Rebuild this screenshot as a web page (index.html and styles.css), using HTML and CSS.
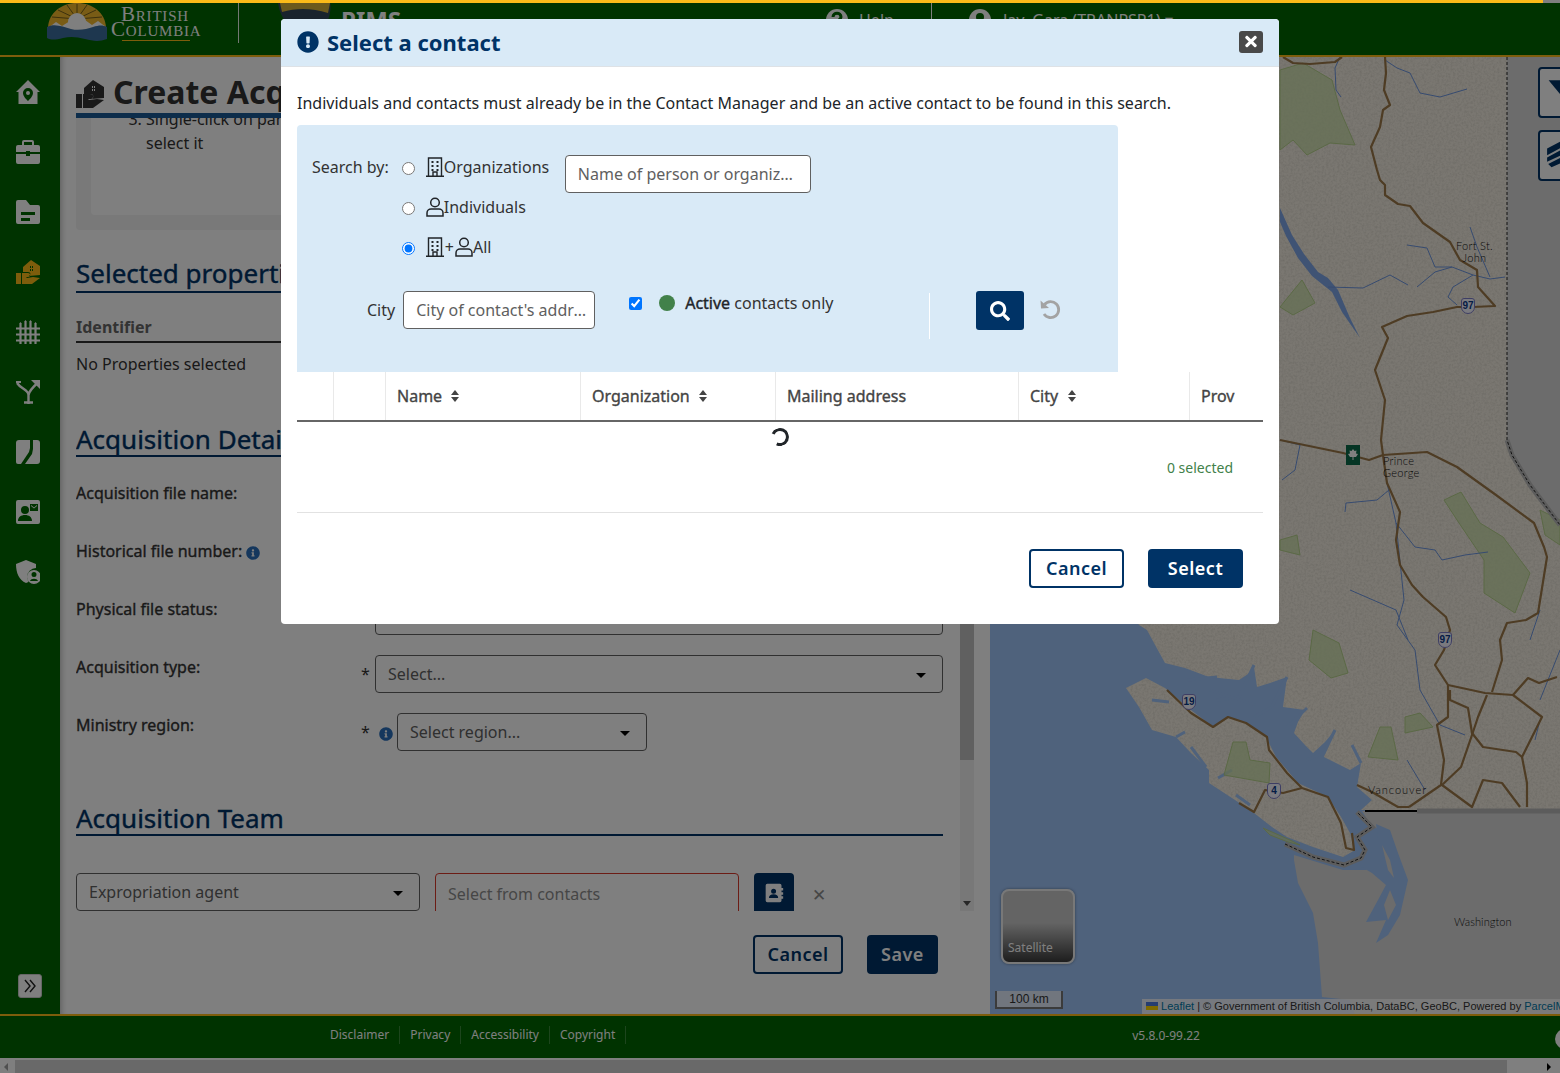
FILE: index.html
```html
<!DOCTYPE html>
<html lang="en">
<head>
<meta charset="utf-8">
<title>PIMS - Create Acquisition File</title>
<link rel="stylesheet" href="styles.css">
</head>
<body>
<div class="app">
  <div class="topline"></div>
  <header class="header">
    <div class="bc-logo">
      <svg class="bc-mark" viewBox="0 0 60 38" width="60" height="38">
        <path d="M1 24C2 10 14 0 30 0s28 10 29 24z" fill="#f2b92c"/>
        <g stroke="#5a4a18" stroke-width=".8"><path d="M30 16V1M30 16 20 2M30 16 40 2M30 16 11 7M30 16 49 7M30 16 5 14M30 16 55 14"/></g>
        <circle cx="30" cy="19" r="9" fill="#fff"/>
        <path d="M1 25 9 19l6 4 8-5 7 4 8-5 7 5 6-4 8 6v3H1z" fill="#fff"/>
        <path d="M0 24c8-4 16 0 24 2s16 0 22-2 10-2 14 0v12c-8 3-14 2-22 0s-14-3-22-1-12 2-16 0z" fill="#3d6f9f"/>
      </svg>
      <div class="bc-name"><span class="bc-line bc-first">British</span><span class="bc-line">Columbia</span><span class="bc-rule"></span></div>
    </div>
    <div class="head-sep"></div>
    <div class="pims">
      <svg viewBox="0 0 56 34" width="56" height="34"><path d="M2 2h52c2 10-2 22-10 30H22C10 26 3 14 2 2z" fill="#33475b"/><path d="M4 3c16-3 32-3 50 0l-2 10C36 8 20 8 6 12z" fill="#d9b23a"/></svg>
      <span class="pims-name">PIMS</span>
    </div>
    <div class="head-right">
      <svg class="head-ico" viewBox="0 0 24 24" width="24" height="24"><circle cx="12" cy="12" r="11" fill="#fff"/><path d="M8 9c0-5 8-5 8 0 0 3-4 3-4 6" fill="none" stroke="#006600" stroke-width="3"/></svg>
      <span class="help">Help</span>
      <div class="head-sep2"></div>
      <svg class="head-ico" viewBox="0 0 24 24" width="24" height="24"><circle cx="12" cy="12" r="11" fill="#fff"/><circle cx="12" cy="9" r="4" fill="#006600"/></svg>
      <span class="user">Jay, Gara (TRANPSP1) ▾</span>
    </div>
  </header>

  <div class="main">
    <nav class="side">
      <svg class="nav-ico" viewBox="0 0 24 24"><path fill-rule="evenodd" d="M12 0 24 12h-2.500V24H2.500V12H0zM12 8a5 5 0 0 0-5 5c0 3 3 6 5 8 2-2 5-5 5-8a5 5 0 0 0-5-5zm0 3a2 2 0 1 1 0 4 2 2 0 0 1 0-4z"/></svg>
      <svg class="nav-ico" viewBox="0 0 24 24"><path d="M8 0h8a2 2 0 0 1 2 2v3h4a2 2 0 0 1 2 2v5H14v-1h-4v1H0V7a2 2 0 0 1 2-2h4V2a2 2 0 0 1 2-2zm0 2v3h8V2zM0 14h10v2h4v-2h10v8a2 2 0 0 1-2 2H2a2 2 0 0 1-2-2z"/></svg>
      <svg class="nav-ico" viewBox="0 0 24 24"><path fill-rule="evenodd" d="M2 0h8l4 5h8a2 2 0 0 1 2 2v15a2 2 0 0 1-2 2H2a2 2 0 0 1-2-2V2a2 2 0 0 1 2-2zm3 12v3h14v-3zm0 6v3h9v-3z"/></svg>
      <svg class="nav-ico nav-active" viewBox="0 0 24 24"><path fill-rule="evenodd" d="M15 0l9 6v9l-11 1c2-1 2-4-1-4H7V7zm-1 6v2h1V6zm2 0v2h1V6zm-2 3v2h1V9zm2 0v2h1V9zM0 13h5v11H0zm6 0h6c3 0 3 4 0 4h-2l1 1 6-1 7 1-8 6H6z"/></svg>
      <svg class="nav-ico" viewBox="0 0 24 24"><path d="M4.500 4V24M9.500 2V24M14.500 2V24M19.500 4V24M0 8.500H24M0 14.500H24M0 20.500H24" fill="none" stroke="#fff" stroke-width="2.200"/><path d="M3 4l1.500-2L6 4zM8 2l1.500-2L11 2zM13 2l1.500-2L16 2zM18 4l1.500-2L21 4z"/></svg>
      <svg class="nav-ico" viewBox="0 0 24 24"><path d="M8 22.500H17M12.500 24V15C12.500 10 5 9 1 3M12.500 15C13 11 17 7 22 2.500" fill="none" stroke="#fff" stroke-width="2.400"/><path d="M15 0h9v9z"/><path d="M0 1h5v2H0z"/></svg>
      <svg class="nav-ico" viewBox="0 0 24 24"><path d="M3 0H14V8L13 12 5 24H2a2 2 0 0 1-2-2V3a3 3 0 0 1 3-3z"/><path d="M17 0h4a3 3 0 0 1 3 3v18a3 3 0 0 1-3 3H9l7-10 1-5z"/></svg>
      <svg class="nav-ico" viewBox="0 0 24 24"><path fill-rule="evenodd" d="M2 0h20a2 2 0 0 1 2 2v20a2 2 0 0 1-2 2H2a2 2 0 0 1-2-2V2a2 2 0 0 1 2-2zm7 6a4 4 0 1 0 0 8 4 4 0 0 0 0-8zm-7 15h14c0-4-3-6-7-6s-7 2-7 6zM14 4v7h8V4zm1 1 3 2.500L21 5v1l-3 2.500L15 6z"/></svg>
      <svg class="nav-ico" viewBox="0 0 24 24"><path fill-rule="evenodd" d="M10 0l10 4v4a9 9 0 0 0-9 9c0 2 .7 3.500 1.500 5l-2.500 1C3 20 0 13 0 4zm8 10a6.500 6.500 0 1 1 0 14 6.500 6.500 0 0 1 0-14zm0 2a2.500 2.500 0 1 0 0 5 2.500 2.500 0 0 0 0-5zm-4 9h8c-1-3-7-3-8 0z"/></svg>
      <div class="side-space"></div>
      <div class="expand">
        <svg viewBox="0 0 16 16" width="16" height="16"><path d="M3 2l5 6-5 6M8 2l5 6-5 6" fill="none" stroke="#222" stroke-width="1.400"/></svg>
      </div>
    </nav>

    <section class="content">
      <div class="title-row">
        <svg class="title-ico" viewBox="0 0 28 30"><path fill-rule="evenodd" d="M17 0l11 7v11l-13 1c3-1 3-5-1-5H8V8zm-1 6v2h1V6zm2 0v2h1V6zm-2 3v2h1V9zm2 0v2h1V9zM0 14h6v14H0zm7 0h8c3 0 3 5 0 5h-3l1 1 8-1 7 1-11 8H7z"/></svg>
        <h1 class="title">Create Acquisition File</h1>
      </div>
      <div class="form-scroll">
        <div class="form">
          <div class="help-box">
            <div class="help-inner">
              <ol class="steps" start="3"><li>Single-click on parcel on the map to select it</li></ol>
            </div>
          </div>
          <h2 class="sec sec-first">Selected properties</h2>
          <div class="ident">Identifier</div>
          <div class="noprops">No Properties selected</div>
          <h2 class="sec sec-details">Acquisition Details</h2>
          <div class="frow"><span class="flabel">Acquisition file name:</span></div>
          <div class="frow"><span class="flabel">Historical file number:</span>
            <svg class="info" viewBox="0 0 512 512"><path d="M256 8C119.043 8 8 119.083 8 256c0 136.997 111.043 248 248 248s248-111.003 248-248C504 119.083 392.957 8 256 8zm0 110c23.196 0 42 18.804 42 42s-18.804 42-42 42-42-18.804-42-42 18.804-42 42-42zm56 254c0 6.627-5.373 12-12 12h-88c-6.627 0-12-5.373-12-12v-24c0-6.627 5.373-12 12-12h12v-64h-12c-6.627 0-12-5.373-12-12v-24c0-6.627 5.373-12 12-12h64c6.627 0 12 5.373 12 12v100h12c6.627 0 12 5.373 12 12v24z"/></svg>
          </div>
          <div class="frow"><span class="flabel">Physical file status:</span><span class="fval"><span class="req"></span><span class="sel sel-wide"><span>Select...</span><i class="caret"></i></span></span></div>
          <div class="frow"><span class="flabel">Acquisition type:</span><span class="fval"><span class="req">*</span><span class="sel sel-wide"><span>Select...</span><i class="caret"></i></span></span></div>
          <div class="frow"><span class="flabel">Ministry region:</span><span class="fval"><span class="req">*</span>
            <svg class="info info-r" viewBox="0 0 512 512"><path d="M256 8C119.043 8 8 119.083 8 256c0 136.997 111.043 248 248 248s248-111.003 248-248C504 119.083 392.957 8 256 8zm0 110c23.196 0 42 18.804 42 42s-18.804 42-42 42-42-18.804-42-42 18.804-42 42-42zm56 254c0 6.627-5.373 12-12 12h-88c-6.627 0-12-5.373-12-12v-24c0-6.627 5.373-12 12-12h12v-64h-12c-6.627 0-12-5.373-12-12v-24c0-6.627 5.373-12 12-12h64c6.627 0 12 5.373 12 12v100h12c6.627 0 12 5.373 12 12v24z"/></svg>
            <span class="sel sel-region"><span>Select region...</span><i class="caret"></i></span></span></div>
          <h2 class="sec sec-team">Acquisition Team</h2>
          <div class="team-row">
            <span class="sel sel-agent"><span>Expropriation agent</span><i class="caret"></i></span>
            <span class="contact-input">Select from contacts</span>
            <span class="contact-btn">
              <svg viewBox="0 0 24 24" width="20" height="20"><path fill-rule="evenodd" d="M4 1h15a2 2 0 0 1 2 2v3h2v3h-2v2h2v3h-2v2h2v3h-2v2a2 2 0 0 1-2 2H4a2 2 0 0 1-2-2V3a2 2 0 0 1 2-2zm7.500 6a3 3 0 1 0 0 6 3 3 0 0 0 0-6zM6 18h11c0-3-2-4.500-5.500-4.500S6 15 6 18z" fill="#fff"/></svg>
            </span>
            <span class="remove">✕</span>
          </div>
        </div>
        <div class="vscroll">
          <div class="vthumb"></div>
          <div class="vrest"></div>
          <i class="varrow"></i>
        </div>
      </div>
      <div class="form-actions">
        <span class="btn btn-ghost btn-form1">Cancel</span>
        <span class="btn btn-solid btn-form2">Save</span>
      </div>
    </section>

    <section class="map">
      <svg class="map-svg" viewBox="990 57 570 957" width="570" height="957" preserveAspectRatio="none">
        <defs>
          <filter id="grain" x="0" y="0" width="100%" height="100%">
            <feTurbulence type="fractalNoise" baseFrequency=".45" numOctaves="3" seed="4"/>
            <feColorMatrix values="0 0 0 0 .5  0 0 0 0 .48  0 0 0 0 .42  0 0 0 .7 -.25"/>
            <feComposite in2="SourceAlpha" operator="in"/>
          </filter>
        </defs>
        <rect class="m-water" x="990" y="57" width="570" height="957"/>
        <path class="m-land" d="M1100 57V560L1139 625 1147 630 1154 643 1165 663 1185 668 1209 677 1239 680 1248 674 1254 667 1257 687 1270 683 1287 677 1283 707 1305 710 1298 722 1294 733 1305 745 1313 753 1325 742 1335 730 1328 745 1324 757 1350 770 1361 763 1357 787 1372 800 1361 810H1560V57z"/>
        <path class="m-land" d="M1126 688 1146 678 1165 688 1191 710 1213 727 1228 717 1246 723 1265 735 1276 757 1298 783 1328 797 1341 817 1350 833 1355 850 1343 857 1313 847 1287 837 1272 827 1254 813 1235 800 1209 783 1209 770 1191 753 1176 737 1152 730 1139 707z"/>
        <g filter="url(#grain)">
          <path d="M1100 57V560L1139 625 1147 630 1154 643 1165 663 1185 668 1209 677 1239 680 1248 674 1254 667 1257 687 1270 683 1287 677 1283 707 1305 710 1298 722 1294 733 1305 745 1313 753 1325 742 1335 730 1328 745 1324 757 1350 770 1361 763 1357 787 1372 800 1361 810H1560V57z"/>
          <path d="M1126 688 1146 678 1165 688 1191 710 1213 727 1228 717 1246 723 1265 735 1276 757 1298 783 1328 797 1341 817 1350 833 1355 850 1343 857 1313 847 1287 837 1272 827 1254 813 1235 800 1209 783 1209 770 1191 753 1176 737 1152 730 1139 707z"/>
        </g>
        <g class="m-fjord">
          <path d="M1187 680 1217 677"/>
          <path d="M1254 665 1239 697 1217 700"/>
          <path d="M1287 677 1272 707 1254 717"/>
          <path d="M1307 708 1287 727"/>
          <path d="M1335 730 1324 753 1306 760"/>
          <path d="M1152 700 1169 702"/>
          <path d="M1176 737 1185 732"/>
          <path d="M1191 747 1206 767"/>
          <path d="M1218 778 1232 770"/>
          <path d="M1236 795 1250 805"/>
          <path d="M1361 763 1352 745"/>
          <path d="M1210 690 1255 705"/>
        </g>
        <path class="m-us" d="M1507 57V440L1512 455 1530 485 1560 525V57z"/>
        <path class="m-us" d="M1362 811 1372 827 1383 830 1378 850 1366 870 1343 870 1294 855 1294 860 1298 883 1313 913 1318 943 1322 997 1350 1000 1355 1014H1560V811z"/>
        <path class="m-water" d="M1376 824 1390 830 1398 853 1408 880 1400 915 1388 935 1376 943 1386 920 1366 922 1378 900 1386 885 1372 873 1360 866 1372 852 1378 840z"/>
        <path class="m-us" d="M1382 845 1390 860 1394 878 1388 870zM1390 890 1396 905 1388 920 1384 905z"/>
        <g class="m-park">
          <path d="M1280 70 1303 63 1332 80 1340 110 1355 145 1330 143 1307 155 1293 140 1280 150z"/>
          <path d="M1280 307 1302 280 1315 303 1293 315z"/>
          <path d="M1444 500 1461 492 1480 523 1503 537 1530 573 1515 613 1484 593 1484 560 1457 520z"/>
          <path d="M1280 540 1297 535 1300 555 1280 550z"/>
          <path d="M1313 630 1339 643 1348 673 1331 678 1309 660z"/>
          <path d="M1233 742 1246 742 1250 760 1270 763 1269 783 1224 775z"/>
          <path d="M1380 727 1391 727 1398 760 1368 757z"/>
          <path d="M1405 717 1420 713 1433 727 1405 733z"/>
          <path d="M1540 510 1560 520V545L1545 535z"/>
          <path d="M1263 828 1290 840 1300 845 1288 842 1270 835z"/>
        </g>
        <path class="m-lake" d="M1280 208 1292 235 1304 254 1318 272 1328 278 1338 290 1350 318 1360 338 1342 312 1332 292 1322 284 1312 276 1298 258 1286 236 1280 222z"/>
        <g class="m-river">
          <path d="M1385 60 1397 68 1410 73 1420 93 1440 97 1467 89"/>
          <path d="M1340 57 1335 68 1336 90 1341 97"/>
          <path d="M1407 245 1427 248 1435 267 1452 267 1473 275 1490 279 1505 277"/>
          <path d="M1470 227 1477 247 1490 277"/>
          <path d="M1417 287 1435 272 1452 267"/>
          <path d="M1473 275 1453 287 1448 297 1457 305"/>
          <path d="M1328 287 1363 288 1390 275 1408 285"/>
          <path d="M1280 440 1300 445 1295 470 1282 480"/>
          <path d="M1389 490 1377 500 1346 503 1345 512"/>
          <path d="M1387 483 1396 523 1415 547 1435 550 1442 560 1465 555 1488 552"/>
          <path d="M1350 590 1396 610 1408 640"/>
          <path d="M1396 523 1404 600 1397 625 1415 650 1420 690 1440 725 1465 735"/>
          <path d="M1530 640 1540 610M1540 700 1560 650M1535 740 1540 720"/>
          <path d="M1407 760 1425 790"/>
        </g>
        <g class="m-road">
          <path d="M1283 57 1293 63 1310 64 1335 62 1342 57"/>
          <path d="M1385 57 1386 73 1384 90 1390 105 1383 110 1380 127 1371 147 1377 170 1380 180 1385 185 1385 195 1398 204 1410 206 1423 223 1450 242 1460 260 1477 270 1478 287 1495 306 1473 307 1457 307 1433 312 1407 316 1382 327 1388 338 1375 370 1385 400 1381 440 1383 455"/>
          <path d="M1280 440 1343 453 1369 460 1383 455 1427 452 1457 467 1496 495 1534 523 1544 547 1547 557 1538 613 1526 620 1507 623 1500 640 1502 660 1492 692"/>
          <path d="M1383 455 1387 483 1400 512 1396 540 1400 565 1412 585 1423 597 1446 617 1450 630 1444 650 1435 665 1448 685 1448 717 1437 725 1444 760 1441 785 1409 807"/>
          <path d="M1448 685 1485 693 1513 695 1528 678 1539 683 1557 677"/>
          <path d="M1487 695 1478 717 1472 735 1461 767 1442 785 1472 807 1483 780 1502 783 1520 807"/>
          <path d="M1450 690 1450 700 1468 708 1472 733 1483 747 1516 752 1522 757 1542 717 1513 695"/>
          <path d="M1522 757 1527 783 1527 807"/>
          <path d="M1357 785 1372 792 1398 807 1409 807"/>
          <path d="M1167 690 1191 713 1213 727 1228 717 1246 723 1267 737 1269 750 1287 773 1302 788 1328 797 1341 823 1346 848 1354 850 1352 833"/>
          <path d="M1302 788 1283 793 1265 790 1254 812 1239 803"/>
        </g>
        <path class="m-us-line" d="M1285 844 1313 857 1344 865 1361 858 1365 850 1357 837 1372 827 1357 812"/>
        <path class="m-bd" d="M1285 844 1313 857 1344 865 1361 858 1365 850 1357 837 1372 827 1357 812"/>
        <path class="m-solid" d="M1365 811H1417"/>
        <path class="m-us-line" d="M1417 811H1560"/>
        <path class="m-us-line" d="M1507 440 1512 455 1530 485 1560 525"/>
        <path class="m-bd" d="M1507 57V440L1512 455 1530 485 1560 525"/>
      </svg>
      <span class="label l-fsj">Fort St.<br>John</span>
      <span class="label l-pg">Prince<br>George</span>
      <span class="label l-van">Vancouver</span>
      <span class="label l-wa">Washington</span>
      <span class="shield s-97a">97</span>
      <span class="shield s-97b">97</span>
      <span class="shield s-19">19</span>
      <span class="shield s-4">4</span>
      <span class="maple"><svg viewBox="0 0 14 20" width="14" height="20"><rect width="14" height="20" fill="#0a6a48"/><path d="M7 4l1.500 2 2-.5-.5 3 2 .5-2 3H7.500v3h-1v-3H4L2 9l2-.5-.5-3 2 .5z" fill="#fff"/></svg></span>
      <div class="map-btn map-btn1"><svg viewBox="0 0 20 20" width="26" height="26"><path d="M2 4h20L12 16z" fill="#003366"/></svg></div>
      <div class="map-btn map-btn2"><svg viewBox="0 0 20 26" width="22" height="30"><path d="M1 9 14 2v6L1 15zM1 17 14 10v5L1 21zM2 23l12-6v5L5 26z" fill="#003366"/></svg></div>
      <div class="satellite"><span>Satellite</span></div>
      <div class="scale">100 km</div>
      <div class="attrib"><svg class="flag" viewBox="0 0 12 8" width="12" height="8"><rect width="12" height="4" fill="#4c7be1"/><rect y="4" width="12" height="4" fill="#ffd500"/></svg> <a>Leaflet</a> | © Government of British Columbia, DataBC, GeoBC, Powered by <a>ParcelMap BC</a></div>
    </section>
  </div>

  <footer class="footer">
    <a class="flink">Disclaimer</a><a class="flink">Privacy</a><a class="flink">Accessibility</a><a class="flink">Copyright</a>
    <span class="version">v5.8.0-99.22</span>
    <span class="fhelp"></span>
  </footer>
  <div class="hscroll">
    <i class="arr arr-l"></i><div class="hthumb"></div><i class="arr arr-r"></i>
  </div>

  <div class="backdrop"></div>
  <div class="topline topline-over"></div>

  <div class="modal">
    <div class="m-head">
      <svg class="m-head-ico" viewBox="0 0 512 512"><path d="M504 256c0 136.997-111.043 248-248 248S8 392.997 8 256C8 119.083 119.043 8 256 8s248 111.083 248 248zm-248 50c-25.405 0-46 20.595-46 46s20.595 46 46 46 46-20.595 46-46-20.595-46-46-46zm-43.673-165.346l7.418 136c.347 6.364 5.609 11.346 11.982 11.346h48.546c6.373 0 11.635-4.982 11.982-11.346l7.418-136c.375-6.874-5.098-12.654-11.982-12.654h-63.383c-6.884 0-12.356 5.78-11.981 12.654z"/></svg>
      <span class="m-title">Select a contact</span>
      <span class="m-close"><svg viewBox="0 0 352 512" width="12" height="17"><path fill="#fff" d="M242.72 256l100.070-100.070c12.280-12.280 12.280-32.190 0-44.480l-22.240-22.240c-12.280-12.280-32.190-12.280-44.480 0L176 189.280 75.930 89.210c-12.280-12.280-32.190-12.280-44.480 0L9.210 111.450c-12.280 12.280-12.280 32.190 0 44.480L109.280 256 9.210 356.070c-12.280 12.280-12.280 32.190 0 44.480l22.240 22.240c12.280 12.280 32.200 12.280 44.480 0L176 322.720l100.070 100.070c12.280 12.280 32.200 12.280 44.480 0l22.240-22.240c12.280-12.280 12.280-32.190 0-44.480L242.720 256z"/></svg></span>
    </div>
    <div class="m-body">
      <p class="m-intro">Individuals and contacts must already be in the Contact Manager and be an active contact to be found in this search.</p>
      <div class="search">
        <div class="s-top">
          <span class="s-label">Search by:</span>
          <div class="s-radios">
            <label class="radio"><input type="radio" name="by">
              <svg class="g-ico" viewBox="0 0 18 20"><path d="M2.500 19V1h13v18M0 19.300h18M7 19v-4h4v4" fill="none" stroke="#212529" stroke-width="1.400"/><path d="M5.500 4h2v2h-2zM10.500 4h2v2h-2zM5.500 8h2v2h-2zM10.500 8h2v2h-2zM5.500 12h2v2h-2zM10.500 12h2v2h-2z" fill="#212529"/></svg>Organizations</label>
            <label class="radio"><input type="radio" name="by">
              <svg class="g-ico" viewBox="0 0 18 20"><circle cx="9" cy="5.500" r="4.300" fill="none" stroke="#212529" stroke-width="1.500"/><path d="M1 19v-3c0-2.500 2-4 4-4h8c2 0 4 1.500 4 4v3z" fill="none" stroke="#212529" stroke-width="1.500"/></svg>Individuals</label>
            <label class="radio"><input type="radio" name="by" checked>
              <svg class="g-ico" viewBox="0 0 18 20"><path d="M2.500 19V1h13v18M0 19.300h18M7 19v-4h4v4" fill="none" stroke="#212529" stroke-width="1.400"/><path d="M5.500 4h2v2h-2zM10.500 4h2v2h-2zM5.500 8h2v2h-2zM10.500 8h2v2h-2zM5.500 12h2v2h-2zM10.500 12h2v2h-2z" fill="#212529"/></svg><span class="plus">+</span><svg class="g-ico" viewBox="0 0 18 20"><circle cx="9" cy="5.500" r="4.300" fill="none" stroke="#212529" stroke-width="1.500"/><path d="M1 19v-3c0-2.500 2-4 4-4h8c2 0 4 1.500 4 4v3z" fill="none" stroke="#212529" stroke-width="1.500"/></svg>All</label>
          </div>
          <input class="s-input s-name" placeholder="Name of person or organization">
        </div>
        <div class="s-bottom">
          <span class="s-city">City</span>
          <input class="s-input s-cityin" placeholder="City of contact's address">
          <label class="s-active"><input type="checkbox" checked><i class="dot"></i><span><span class="strong">Active</span> contacts only</span></label>
          <div class="s-sep"></div>
          <span class="s-go"><svg viewBox="0 0 512 512" width="20" height="20"><path fill="#fff" d="M505 442.700L405.300 343c-4.500-4.500-10.600-7-17-7H372c27.600-35.300 44-79.700 44-128C416 93.100 322.900 0 208 0S0 93.100 0 208s93.100 208 208 208c48.300 0 92.700-16.400 128-44v16.300c0 6.400 2.500 12.500 7 17l99.700 99.700c9.400 9.400 24.600 9.400 33.900 0l28.300-28.300c9.400-9.400 9.400-24.600.1-34zM208 336c-70.700 0-128-57.200-128-128 0-70.700 57.200-128 128-128 70.700 0 128 57.200 128 128 0 70.700-57.200 128-128 128z"/></svg></span>
          <svg class="s-reset" viewBox="0 0 24 24" width="24" height="24"><path d="M6.500 7.500A8 8 0 1 1 6 17" fill="none" stroke="#a3a3a3" stroke-width="2.800"/><path d="M2.500 3.500l.5 8 8-.5z" fill="#a3a3a3"/></svg>
        </div>
      </div>
      <div class="t-head">
        <div class="th th-c1"></div>
        <div class="th th-c2"></div>
        <div class="th th-name">Name<i class="sort"></i></div>
        <div class="th th-org">Organization<i class="sort"></i></div>
        <div class="th th-addr">Mailing address</div>
        <div class="th th-city">City<i class="sort sort-city"></i></div>
        <div class="th th-prov">Prov</div>
      </div>
      <div class="t-loading"><span class="spinner"></span></div>
      <div class="t-count">0 selected</div>
      <hr class="m-rule">
      <div class="m-actions">
        <span class="btn btn-ghost btn-modal">Cancel</span>
        <span class="btn btn-solid btn-modal">Select</span>
      </div>
    </div>
  </div>
</div>
</body>
</html>
```
FILE: styles.css
```css
* { box-sizing: border-box; }
html, body { margin: 0; padding: 0; height: 100%; overflow: hidden; }
body { font-family: "Noto Sans", sans-serif; font-size: 16px; color: #212529; background: #fff; }
.app { position: relative; width: 1560px; height: 1073px; overflow: hidden; display: flex; flex-direction: column; }

.topline { height: 3px; width: 1543px; background: #fcba19; flex: none; }
.topline-over { position: absolute; left: 0; top: 0; z-index: 6; }

.header { height: 54px; flex: none; background: #006600; border-bottom: 2px solid #fcba19; display: flex; align-items: flex-start; padding-left: 47px; overflow: hidden; }
.bc-logo { display: flex; width: 191px; height: 42px; }
.bc-mark { flex: none; }
.bc-name { margin-left: 4px; padding-top: 4px; display: flex; flex-direction: column; font-family: "Liberation Serif", serif; color: #fff; width: 90px; height: 38px; }
.bc-line { font-variant: small-caps; font-size: 21px; line-height: 15px; letter-spacing: .8px; white-space: nowrap; }
.bc-first { margin-left: 10px; }
.bc-rule { width: 68px; height: 1px; background: #fcba19; margin: 3px 0 0 11px; flex: none; }
.head-sep { width: 1px; height: 40px; background: #fff; opacity: .9; flex: none; }
.pims { margin-left: 37px; display: flex; align-items: flex-start; width: 560px; flex: none; margin-top: -3px; }
.pims-name { margin-left: 9px; margin-top: 3px; font-size: 24px; font-weight: 700; color: #fff; }
.head-right { display: flex; align-items: center; margin-left: -11px; height: 44px; color: #fff; flex: none; margin-top: -2px; }
.head-ico { flex: none; margin-top: -6px; }
.help { margin-left: 10px; font-size: 16px; width: 72px; margin-top: -6px; }
.head-sep2 { width: 1px; height: 44px; background: #fff; margin-right: 36px; }
.user { margin-left: 11px; font-size: 16px; margin-top: -6px; white-space: nowrap; }

.main { flex: none; height: 957px; display: flex; }
.side { flex: none; width: 60px; background: #006600; display: flex; flex-direction: column; align-items: center; gap: 36px; padding: 23px 4px 0 0; }
.nav-ico { width: 24px; height: 24px; fill: #fff; flex: none; }
.nav-active { fill: #fcba19; }
.side-space { flex: 1; }
.expand { width: 24px; height: 24px; background: #fff; border-radius: 3px; border: 1px solid #ccc; display: flex; align-items: center; justify-content: center; margin: 0 0 16px 4px; flex: none; }

.content { flex: none; width: 930px; background: #fff; padding-left: 16px; box-shadow: inset 6px 0 6px -5px rgba(0,0,0,.3); }
.title-row { height: 61px; display: flex; align-items: flex-start; padding-top: 21px; width: 867px; border-bottom: 5px solid #1a5a96; position: relative; z-index: 1; }
.title-ico { width: 28px; height: 30px; fill: #333; flex: none; margin-top: 2px; }
.title { margin: -9px 0 0 9px; font-size: 32px; line-height: 46px; font-weight: 700; color: #333; white-space: nowrap; }
.form-scroll { height: 793px; display: flex; overflow: hidden; }
.form { width: 867px; flex: none; }
.vscroll { width: 14px; margin-left: 17px; flex: none; background: #f0f0f0; display: flex; flex-direction: column; }
.vthumb { height: 642px; background: #c0c0c0; flex: none; }
.vrest { flex: 1; }
.varrow { width: 0; height: 0; border-left: 4px solid transparent; border-right: 4px solid transparent; border-top: 5px solid #505050; margin: 0 3px 5px; }
.help-box { height: 117px; margin-top: -5px; background: #f2f2f2; border-radius: 4px; padding: 0 16px 15px 15px; }
.help-inner { height: 102px; background: #fff; border-radius: 4px; display: flow-root; }
.steps { margin: -6px 0 0; padding: 0 0 0 55px; width: 345px; line-height: 24px; color: #333; }
.sec { margin: 0; font-size: 26px; line-height: 36px; font-weight: 400; -webkit-text-stroke: .4px #003366; color: #003366; border-bottom: 2px solid #003366; white-space: nowrap; }
.sec-first { margin-top: 27px; height: 36px; line-height: 33px; }
.ident { margin-top: 23px; height: 27px; font-weight: 700; color: #666; border-bottom: 2px solid #333; font-size: 16px; line-height: 22px; }
.noprops { margin-top: 9px; line-height: 24px; color: #333; }
.sec-details { margin-top: 45px; height: 36px; line-height: 36px; }
.frow { height: 58px; display: flex; align-items: flex-start; color: #333; }
.sec-details + .frow { margin-top: 24px; }
.flabel { line-height: 40px; margin-top: -8px; flex: none; width: 0; white-space: nowrap; -webkit-text-stroke: .35px #333; }
.flabel + .info { margin: 7px 0 0 170px; }
.info { width: 14px; height: 14px; fill: #2a6ebb; flex: none; }
.fval { margin-left: 285px; display: flex; align-items: center; height: 38px; flex: none; }
.req { width: 14px; font-size: 16px; color: #333; flex: none; }
.info-r { margin: 3px 4px 0 4px; }
.sel { height: 38px; background: #fff; border: 1px solid #606060; border-radius: 4px; display: flex; align-items: center; justify-content: space-between; padding: 0 16px 0 12px; color: #606060; flex: none; }
.sel-wide { width: 568px; }
.sel-region { width: 250px; }
.sel-agent { width: 344px; color: #606060; }
.caret { width: 0; height: 0; border-left: 5px solid transparent; border-right: 5px solid transparent; border-top: 5px solid #000; margin-top: 2px; }
.sec-team { margin-top: 29px; height: 36px; line-height: 36px; }
.team-row { margin-top: 37px; display: flex; height: 38px; align-items: flex-start; }
.contact-input { margin-left: 15px; width: 304px; height: 44px; border: 1px solid #d8392b; border-radius: 4px; padding-left: 12px; line-height: 40px; color: #8d8d8d; flex: none; }
.contact-btn { margin-left: 15px; width: 40px; height: 44px; background: #003366; border-radius: 4px; display: flex; justify-content: center; padding-top: 10px; flex: none; }
.remove { margin-left: 18px; color: #8d8d8d; font-size: 17px; line-height: 44px; }
.btn { display: flex; align-items: center; justify-content: center; font-weight: 600; font-size: 18px; letter-spacing: .5px; border-radius: 4px; height: 39px; flex: none; padding-bottom: 2px; }
.btn-ghost { background: #fff; color: #003366; border: 2px solid #003366; }
.btn-solid { background: #003366; color: #fff; }
.form-actions { display: flex; justify-content: flex-end; gap: 24px; padding: 24px 5px 0 0; width: 867px; }
.btn-form1 { width: 90px; }
.btn-form2 { width: 71px; }

.map { flex: none; width: 570px; position: relative; overflow: hidden; }
.map-svg { display: block; }
.m-water { fill: #9ec4f8; }
.m-land { fill: #f5efe3; }
.m-us { fill: #d8d8d8; }
.m-park { fill: #cbe0a8; fill-opacity: .75; stroke: #b6d28c; stroke-width: 1; }
.m-lake { fill: #7fa6e8; }
.m-river { fill: none; stroke: #6d96e0; stroke-width: 1; }
.m-fjord { fill: none; stroke: #9ec4f8; stroke-width: 3; }
.m-road { fill: none; stroke: #9c7848; stroke-width: 2.200; stroke-linejoin: round; }
.m-us-line { fill: none; stroke: #b9b9b9; stroke-width: 5; }
.m-bd { fill: none; stroke: #222; stroke-width: 1; stroke-dasharray: 3 2; }
.m-solid { stroke: #000; stroke-width: 2; fill: none; }
.label { position: absolute; font-family: "Lato", sans-serif; font-weight: 300; font-size: 11px; line-height: 12px; letter-spacing: .3px; color: #111; text-align: center; }
.l-fsj { left: 466px; top: 183px; }
.l-pg { left: 393px; top: 398px; text-align: left; }
.l-van { left: 378px; top: 727px; letter-spacing: 1px; }
.l-wa { left: 464px; top: 859px; letter-spacing: .1px; }
.shield { position: absolute; width: 14px; height: 16px; background: #f5f5ff; border: 1px solid #7d7dc8; border-radius: 3px 3px 7px 7px; font-family: "Liberation Sans", sans-serif; font-weight: 700; font-size: 10px; line-height: 14px; text-align: center; color: #0a3a8a; }
.s-97a { left: 471px; top: 241px; }
.s-97b { left: 448px; top: 575px; }
.s-19 { left: 192px; top: 637px; }
.s-4 { left: 277px; top: 726px; }
.maple { position: absolute; left: 356px; top: 388px; }
.map-btn { position: absolute; left: 548px; width: 60px; background: #fff; border: 2px solid #003366; border-radius: 4px; padding: 6px 0 0 6px; }
.map-btn1 { top: 10px; height: 51px; }
.map-btn2 { top: 73px; height: 51px; }
.satellite { position: absolute; left: 11px; top: 832px; width: 74px; height: 75px; border: 2px solid #f0f0f0; border-radius: 8px; background: linear-gradient(#c8c8c8 45%, #3c3c3c); box-shadow: 0 0 3px rgba(0,0,0,.4); display: flex; align-items: flex-end; padding: 0 0 6px 5px; color: #fff; font-size: 12px; line-height: 16px; }
.scale { position: absolute; left: 5px; top: 934px; width: 68px; height: 18px; border: 2px solid #777; border-top: 0; background: rgba(255,255,255,.7); font-family: "Liberation Sans", sans-serif; font-size: 12px; line-height: 17px; text-align: center; color: #333; }
.attrib { position: absolute; left: 152px; bottom: 0; width: 500px; height: 15px; background: rgba(255,255,255,.8); font-family: "Liberation Sans", sans-serif; font-size: 11px; line-height: 15px; padding-left: 4px; color: #333; white-space: nowrap; }
.attrib a { color: #0078a8; }
.flag { vertical-align: baseline; }

.footer { flex: none; height: 44px; background: #006600; border-top: 2px solid #fcba19; display: flex; align-items: center; padding: 0 0 4px 320px; position: relative; color: #fff; font-size: 12px; }
.flink { padding: 0 10px; line-height: 18px; border-right: 1px solid #3a8a3a; color: #fff; }
.version { margin-left: 506px; }
.fhelp { position: absolute; left: 1555px; top: 13px; width: 20px; height: 20px; background: #fff; border-radius: 50%; }
.hscroll { flex: none; height: 15px; background: #fff; display: flex; align-items: center; padding-top: 2px; }
.hthumb { width: 1492px; height: 13px; background: #d2d2d2; margin-left: 7px; }
.arr { width: 0; height: 0; border-top: 4px solid transparent; border-bottom: 4px solid transparent; }
.arr-l { border-right: 4px solid #a0a0a0; margin-left: 4px; }
.arr-r { border-left: 4px solid #000; margin-left: 40px; }

.backdrop { position: absolute; inset: 0; background: rgba(0,0,0,.5); z-index: 5; }

.modal { position: absolute; left: 281px; top: 19px; width: 998px; height: 605px; background: #fff; border-radius: 4px; z-index: 10; display: flex; flex-direction: column; }
.m-head { height: 48px; flex: none; background: #d9eaf7; border-bottom: 1px solid #dee2e6; border-radius: 4px 4px 0 0; display: flex; align-items: center; padding: 0 16px 2px; }
.m-head-ico { width: 22px; height: 22px; fill: #003366; flex: none; margin-top: 1px; }
.m-title { margin-left: 8px; font-size: 22px; font-weight: 700; color: #003366; flex: 1; line-height: 30px; }
.m-close { width: 24px; height: 22px; background: #494949; border-radius: 3px; display: flex; align-items: center; justify-content: center; }
.m-body { padding: 0 16px; flex: 1; }
.m-intro { margin: 0; padding-top: 24px; height: 58px; line-height: 24px; white-space: nowrap; color: #212529; }
.search { width: 821px; height: 247px; background: #d9eaf7; border-radius: 4px 4px 0 0; padding: 30px 0 0 15px; color: #333; }
.s-top { display: flex; height: 136px; align-items: flex-start; }
.s-label { line-height: 24px; flex: none; }
.s-radios { margin-left: 13px; width: 148px; flex: none; display: flex; flex-direction: column; gap: 16px; }
.radio { display: flex; align-items: center; height: 24px; white-space: nowrap; }
.radio input { width: 13px; height: 13px; margin: 2px 11px 0 0; flex: none; }
.g-ico { width: 18px; height: 20px; flex: none; }
.plus { margin: 0 1px; }
.s-input { font-family: "Noto Sans", sans-serif; font-size: 16px; height: 38px; border: 1px solid #606060; border-radius: 4px; padding: 0 12px; background: #fff; color: #212529; flex: none; text-overflow: ellipsis; }
.s-input::placeholder { color: #606060; opacity: 1; }
.s-name { width: 246px; margin-left: 15px; }
.s-bottom { display: flex; align-items: flex-start; height: 48px; }
.s-city { margin-left: 55px; line-height: 38px; flex: none; }
.s-cityin { width: 192px; margin-left: 8px; padding-right: 7px; }
.s-active { margin-left: 34px; width: 300px; display: flex; align-items: center; height: 24px; flex: none; }
.s-active input { width: 13px; height: 13px; margin: 0 17px 0 0; flex: none; }
.dot { width: 16px; height: 16px; background: #42814a; border-radius: 50%; flex: none; margin-right: 10px; }
.strong { -webkit-text-stroke: .4px #212529; color: #212529; }
.s-sep { width: 1px; height: 46px; background: #fff; flex: none; margin-top: 2px; }
.s-go { margin-left: 46px; width: 48px; height: 39px; background: #003366; border-radius: 3px; display: flex; align-items: center; justify-content: center; flex: none; }
.s-reset { margin: 6px 0 0 14px; flex: none; }
.t-head { display: flex; height: 50px; border-bottom: 2px solid #666; }
.th { height: 48px; display: flex; align-items: center; padding-left: 11px; border-right: 1px solid #e9e9e9; color: #444; -webkit-text-stroke: .35px #444; flex: none; }
.th-c1 { width: 37px; }
.th-c2 { width: 52px; }
.th-name { width: 195px; }
.th-org { width: 195px; }
.th-addr { width: 243px; }
.th-city { width: 171px; }
.th-prov { flex: 1; border-right: 0; }
.sort { width: 8px; height: 12px; margin-left: 9px; position: relative; }
.sort-city { margin-left: 10px; }
.sort::before, .sort::after { content: ""; position: absolute; left: 0; border-left: 4px solid transparent; border-right: 4px solid transparent; }
.sort::before { top: 0; border-bottom: 5px solid #444; }
.sort::after { bottom: 0; border-top: 5px solid #444; }
.t-loading { height: 30px; display: flex; justify-content: center; align-items: center; }
.spinner { width: 18px; height: 18px; border: 3px solid #212529; border-left-color: transparent; border-radius: 50%; transform: rotate(-20deg); }
.t-count { text-align: right; padding-right: 30px; color: #42814a; font-size: 14px; line-height: 20px; margin-top: 6px; }
.m-rule { margin: 34px 0 0; border: 0; border-top: 1px solid #e2e2e2; }
.m-actions { display: flex; justify-content: flex-end; gap: 24px; padding: 36px 20px 0 0; }
.btn-modal { width: 95px; }
```
